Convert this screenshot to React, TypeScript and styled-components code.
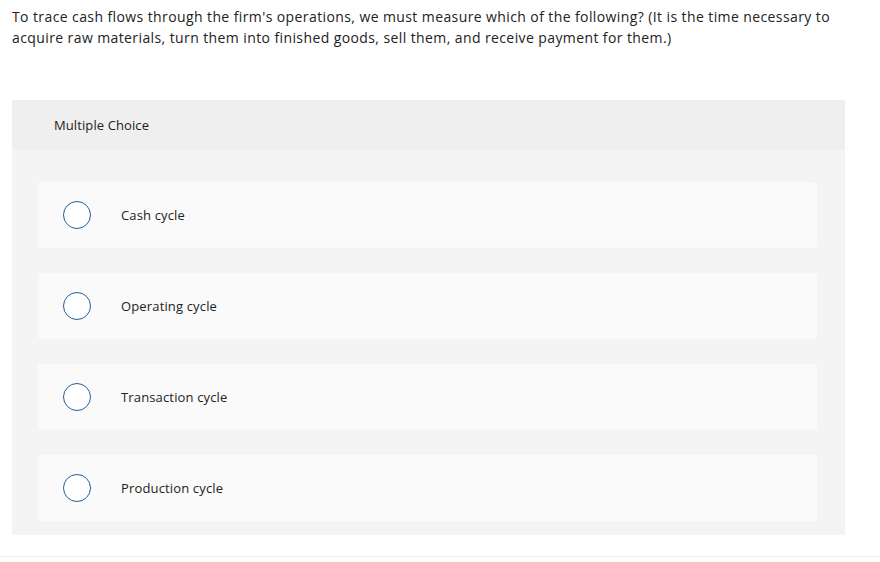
import React from "react";
import styled, { createGlobalStyle } from "styled-components";

const Global = createGlobalStyle`
  html, body { margin: 0; padding: 0; background: #fff; }
  body { font-family: "Open Sans", "Lato", sans-serif; color: #222; }
`;

const Page = styled.div`
  width: 880px;
  height: 562px;
  display: flex;
  flex-direction: column;
  box-sizing: border-box;
`;

const Prompt = styled.p`
  margin: 0;
  padding: 6px 12px 0 12px;
  font-size: 14px;
  letter-spacing: 0.4px;
  line-height: 21px;
  color: #222;
  width: 830px;
`;

const Panel = styled.section`
  margin: 52px 0 0 12px;
  width: 833px;
  background: #f4f4f4;
  display: flex;
  flex-direction: column;
`;

const Header = styled.div`
  height: 50px;
  background: #efefef;
  display: flex;
  align-items: center;
  padding-left: 42px;
  font-size: 13px;
  letter-spacing: 0.1px;
  color: #222;
`;

const Options = styled.div`
  display: flex;
  flex-direction: column;
  gap: 25px;
  padding: 32px 28px 14px 26px;
`;

const Option = styled.label`
  height: 66px;
  background: #fafafa;
  border-radius: 3px;
  display: flex;
  align-items: center;
  padding-left: 25px;
  font-size: 13px;
  letter-spacing: 0.15px;
  color: #222;
`;

const Radio = styled.span`
  width: 26px;
  height: 26px;
  border: 1.5px solid #1f5fa0;
  border-radius: 50%;
  background: #fff;
  flex: none;
  margin-right: 30px;
`;

const Rule = styled.div`
  margin-top: auto;
  margin-bottom: 5px;
  height: 1px;
  background: #ececec;
`;

const choices = ["Cash cycle", "Operating cycle", "Transaction cycle", "Production cycle"];

export default function App() {
  return (
    <Page>
      <Global />
      <Prompt>
        To trace cash flows through the firm's operations, we must measure which of the following? (It is the time necessary to acquire raw materials, turn them into finished goods, sell them, and receive payment for them.)
      </Prompt>
      <Panel>
        <Header>Multiple Choice</Header>
        <Options>
          {choices.map((c) => (
            <Option key={c}>
              <Radio />
              {c}
            </Option>
          ))}
        </Options>
      </Panel>
      <Rule />
    </Page>
  );
}
